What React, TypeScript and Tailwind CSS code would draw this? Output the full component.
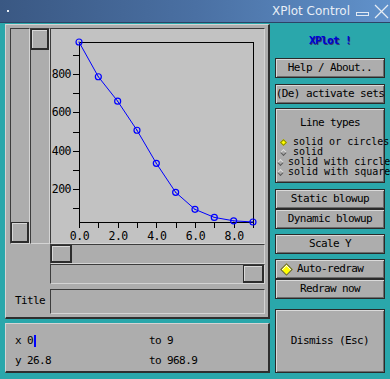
import React from 'react';

const mono = "font-['DejaVu_Sans_Mono',monospace] text-[11px] tracking-[-0.6px] text-black";
const raised = 'bg-[#adadad] border border-[#2a2a2a] shadow-[inset_1px_1px_0_#dadada,inset_-1px_-1px_0_#6c6c6c]';
const sunken = 'border-t border-l border-b border-r border-t-[#3c3c3c] border-l-[#3c3c3c] border-b-[#d4d4d4] border-r-[#d4d4d4]';

// y range 26.8 .. 968.9, x range 0 .. 9
const data = [968.9, 787, 659, 507, 334, 182, 93, 51, 33, 26.8];
const px = (x: number) => 28 + x * 19.33;
const py = (v: number) => 193 - (v - 26.8) * 0.19106;

function Button({ children, className = '' }: { children: React.ReactNode; className?: string }) {
  return (
    <div className={`flex items-center justify-center h-[20px] whitespace-nowrap ${raised} ${mono} ${className}`}>
      {children}
    </div>
  );
}

function Thumb({ className = '' }: { className?: string }) {
  return (
    <div
      className={`bg-[#adadad] border border-[#2c2c2c] border-r-2 border-b-2 shadow-[inset_1px_1px_0_#d8d8d8] ${className}`}
    />
  );
}

function Plot() {
  const points = data.map((v, i) => `${px(i)},${py(v)}`).join(' ');
  return (
    <svg width="213" height="214" className="block">
      <g shapeRendering="crispEdges" stroke="#000" strokeWidth="1">
        <line x1="28.5" y1="13.5" x2="202.5" y2="13.5" />
        <line x1="28.5" y1="13.5" x2="28.5" y2="193.5" />
        <line x1="202.5" y1="13.5" x2="202.5" y2="193.5" />
        <line x1="28.5" y1="193.5" x2="202.5" y2="193.5" />
        {[100, 200, 300, 400, 500, 600, 700, 800, 900].map((v) => (
          <line key={v} x1="22" y1={Math.round(py(v)) + 0.5} x2="28" y2={Math.round(py(v)) + 0.5} />
        ))}
        {[0, 1, 2, 3, 4, 5, 6, 7, 8, 9].map((x) => (
          <line key={x} x1={Math.round(px(x)) + 0.5} y1="193" x2={Math.round(px(x)) + 0.5} y2="199" />
        ))}
      </g>
      <g fontFamily="'DejaVu Sans Mono', monospace" fontSize="11.5" letterSpacing="-0.5" fill="#000">
        {[200, 400, 600, 800].map((v) => (
          <text key={v} x="20" y={py(v) + 4} textAnchor="end">
            {v}
          </text>
        ))}
        {[0, 2, 4, 6, 8].map((x) => (
          <text key={x} x={px(x) + 0.5} y="211" textAnchor="middle">
            {x.toFixed(1)}
          </text>
        ))}
      </g>
      <polyline points={points} fill="none" stroke="#0000ff" strokeWidth="1" />
      {data.map((v, i) => (
        <g key={i}>
          <circle cx={px(i)} cy={py(v)} r="3" fill="none" stroke="#0000ff" strokeWidth="1.2" />
          <rect x={px(i) - 0.5} y={py(v) - 0.5} width="1" height="1" fill="#0000ff" />
        </g>
      ))}
    </svg>
  );
}

function Diamond({ on }: { on?: boolean }) {
  return (
    <div className="w-[10px] flex items-center justify-center">
      <div
        className={
          on
            ? 'w-[5px] h-[5px] rotate-45 bg-[#ffff00] border border-[#8a8a00]'
            : 'w-[5px] h-[5px] rotate-45 bg-[#a8a8a8] border border-t-[#dcdcdc] border-l-[#dcdcdc] border-b-[#5a5a5a] border-r-[#5a5a5a]'
        }
      />
    </div>
  );
}

export default function App() {
  return (
    <div className="w-[390px] h-[379px] overflow-hidden bg-[#2aa7ab] flex flex-col">
      {/* title bar */}
      <div className="h-[23px] flex items-center bg-gradient-to-r from-[#3a5883] via-[#4a70a3] to-[#6192cb] border-b border-[#2d4466]">
        <div className="ml-[7px] w-[2px] h-[2px] bg-[#e6ecf4]" />
        <div className="ml-auto font-['DejaVu_Sans',sans-serif] text-[12px] text-[#e8eef6] leading-none">XPlot Control</div>
        <svg width="14" height="6" className="ml-[6px] mt-[8px]">
          <rect x="0.5" y="0.5" width="12" height="3" fill="none" stroke="#e0e8f2" />
        </svg>
        <svg width="15" height="15" className="ml-[4px] mr-[1px]">
          <line x1="1" y1="1" x2="14" y2="14" stroke="#e6ecf4" strokeWidth="1.2" />
          <line x1="14" y1="1" x2="1" y2="14" stroke="#e6ecf4" strokeWidth="1.2" />
        </svg>
      </div>

      <div className="flex pl-[5px] pt-[1px]">
        {/* left column */}
        <div className="w-[265px] flex flex-col">
          <div className="h-[295px] bg-[#adadad] border-t border-l border-t-[#d4d4d4] border-l-[#d4d4d4] border-b-2 border-r-2 border-b-[#2e2e2e] border-r-[#2e2e2e] pl-[4px] pt-[3px] pr-[3px] flex flex-col">
            <div className="flex h-[216px]">
              <div className={`w-[20px] bg-[#adadad] flex flex-col justify-end ${sunken}`}>
                <Thumb className="h-[21px] w-[18px]" />
              </div>
              <div className={`w-[20px] bg-[#adadad] flex flex-col ${sunken}`}>
                <Thumb className="h-[21px] w-[18px]" />
              </div>
              <div className={`w-[215px] bg-[#c2c2c2] ${sunken}`}>
                <Plot />
              </div>
            </div>
            <div className="flex h-[20px]">
              <div className="w-[40px]" />
              <div className={`w-[215px] bg-[#adadad] flex ${sunken}`}>
                <Thumb className="w-[21px] h-[18px]" />
              </div>
            </div>
            <div className="flex h-[20px]">
              <div className="w-[40px]" />
              <div className={`w-[215px] bg-[#adadad] flex justify-end ${sunken}`}>
                <Thumb className="w-[21px] h-[18px]" />
              </div>
            </div>
            <div className="flex h-[25px] mt-[5px]">
              <div className={`w-[40px] flex items-center justify-end pr-[5px] ${mono}`}>Title</div>
              <div className={`w-[215px] bg-[#adadad] ${sunken}`} />
            </div>
          </div>

          <div className="mt-[4px] h-[50px] bg-[#adadad] border-t border-l border-t-[#d4d4d4] border-l-[#d4d4d4] border-b-2 border-r-2 border-b-[#2e2e2e] border-r-[#2e2e2e] pl-[9px] pt-[7px] flex flex-col">
            <div className={`flex h-[20px] items-center whitespace-pre ${mono}`}>
              <div className="w-[134px] flex items-center">
                x 0<span className="inline-block w-[2px] h-[12px] bg-[#0000ff] ml-[1px]" />
              </div>
              <div>to 9</div>
            </div>
            <div className={`flex h-[20px] items-center whitespace-pre ${mono}`}>
              <div className="w-[134px]">y 26.8</div>
              <div>to 968.9</div>
            </div>
          </div>
        </div>

        {/* right column */}
        <div className="ml-[5px] w-[110px] flex flex-col">
          <div className="h-[34px] flex items-center justify-center">
            <span className="font-['DejaVu_Sans_Mono',monospace] text-[11px] font-bold tracking-[-0.6px] text-[#0000d8] [text-shadow:1px_1px_0_#3a3a6a]">
              XPlot !
            </span>
          </div>
          <Button>Help / About..</Button>
          <Button className="mt-[6px]">(De) activate sets</Button>
          <div className={`mt-[4px] h-[75px] flex flex-col ${raised} ${mono} overflow-visible`}>
            <div className="h-[28px] flex items-center justify-center">Line types</div>
            <div className="flex flex-col whitespace-nowrap text-[10px] tracking-normal leading-[10px] -mr-[10px]">
              {['solid or circles', 'solid', 'solid with circles', 'solid with squares'].map((t, i) => (
                <div key={t} className="flex items-center h-[10px] pl-[2px]">
                  <Diamond on={i === 0} />
                  <span className="ml-[5px]">{t}</span>
                </div>
              ))}
            </div>
          </div>
          <Button className="mt-[6px]">Static blowup</Button>
          <Button>Dynamic blowup</Button>
          <Button className="mt-[5px]">Scale Y</Button>
          <div className={`mt-[5px] h-[20px] flex items-center whitespace-nowrap ${raised} ${mono}`}>
            <div className="w-[20px] flex items-center justify-center">
              <div className="w-[9px] h-[9px] rotate-45 bg-[#ffff00] border border-[#555] shadow-[inset_1px_1px_0_#fffff0]" />
            </div>
            <span className="ml-[1px]">Auto-redraw</span>
          </div>
          <Button>Redraw now</Button>
          <Button className="mt-[10px] h-[64px]">Dismiss (Esc)</Button>
        </div>
      </div>
    </div>
  );
}
